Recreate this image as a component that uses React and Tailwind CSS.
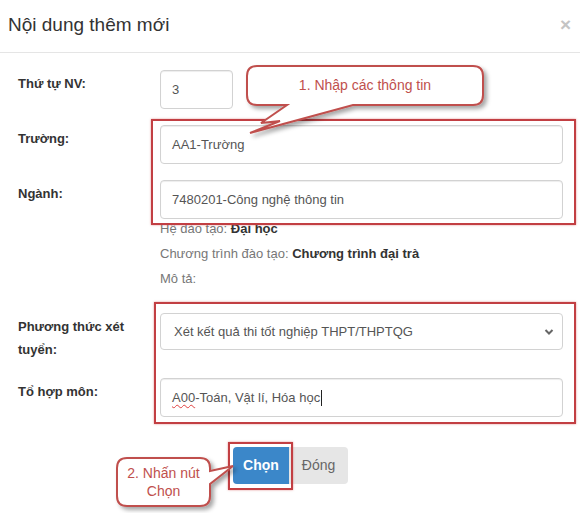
function Row({ label, children, className = "" }) {
  return (
    <div className={"flex " + className}>
      <label className="w-[142px] shrink-0 pr-[15px] pt-[2px] text-[13px] font-bold leading-[23px] text-[#333]">
        {label}
      </label>
      <div className="min-w-0 flex-1">{children}</div>
    </div>
  );
}

function Field({ children, className = "" }) {
  return (
    <div
      className={
        "flex h-[39px] items-center rounded-[4px] border border-[#d2d2d2] bg-white pl-[11px] text-[13px] text-[#555] shadow-[inset_0_1px_1px_rgba(0,0,0,0.075)] " +
        className
      }
    >
      {children}
    </div>
  );
}

export default function App() {
  return (
    <div className="relative h-[513px] w-[580px] overflow-hidden bg-white font-['Liberation_Sans',Arial,sans-serif] text-[#333]">
      {/* Header */}
      <div className="flex h-[53px] items-center justify-between border-b border-[#e5e5e5] pb-[3px] pl-2 pr-[9px]">
        <h4 className="text-[19px] leading-none text-[#333]">Nội dung thêm mới</h4>
        <span className="text-[19px] font-bold leading-none text-[#c4c4c4]">×</span>
      </div>

      {/* Body */}
      <div className="flex flex-col pl-[18px] pr-[17px] pt-[17px]">
        <Row label="Thứ tự NV:" className="mb-4">
          <Field className="w-[73px]">3</Field>
        </Row>
        <Row label="Trường:" className="mb-4">
          <Field>AA1-Trường</Field>
        </Row>
        <Row label="Ngành:" className="mb-[19px]">
          <Field>7480201-Công nghệ thông tin</Field>
          <div className="-mt-[3px] mb-[3px] text-[13px] leading-[25px] text-[#777]">
            <div>
              Hệ đào tạo: <b className="text-[#333]">Đại học</b>
            </div>
            <div>
              Chương trình đào tạo: <b className="text-[#333]">Chương trình đại trà</b>
            </div>
            <div>Mô tả:</div>
          </div>
        </Row>
        <Row label="Phương thức xét tuyển:" className="mb-[17px]">
          <div className="flex h-[37px] items-center justify-between rounded-[4px] border border-[#d2d2d2] bg-white pl-[13px] pr-[8px] text-[13px] text-[#555]">
            <span>Xét kết quả thi tốt nghiệp THPT/THPTQG</span>
            <svg width="10" height="8" viewBox="0 0 10 8">
              <path d="M1.5 2 L5 5.5 L8.5 2" fill="none" stroke="#666" strokeWidth="2" />
            </svg>
          </div>
        </Row>
        <Row label="Tổ hợp môn:" className="mb-[30px]">
          <Field>
            <span className="underline decoration-[#e04040] decoration-wavy decoration-1 underline-offset-2">A00</span>
            <span>-Toán, Vật lí, Hóa học</span>
            <span className="ml-[1px] inline-block h-[16px] w-px bg-[#222]" />
          </Field>
        </Row>
        <div className="flex justify-center">
          <button className="h-[37px] w-[56px] rounded-l-[4px] bg-[#3b87c9] text-[14px] font-bold text-white">
            Chọn
          </button>
          <button className="h-[37px] w-[59px] rounded-r-[4px] bg-[#e6e6e6] text-[14px] text-[#666]">
            Đóng
          </button>
        </div>
      </div>

      {/* Annotation rectangles */}
      <div className="pointer-events-none absolute left-[151px] top-[119px] h-[106px] w-[425px] border-2 border-[#c23f43] shadow-[0_0_2px_rgba(210,80,80,0.6)]" />
      <div className="pointer-events-none absolute left-[154px] top-[302px] h-[122px] w-[422px] border-2 border-[#c23f43] shadow-[0_0_2px_rgba(210,80,80,0.6)]" />
      <div className="pointer-events-none absolute left-[228px] top-[442px] h-[48px] w-[65px] border-2 border-[#c23f43] shadow-[0_0_2px_rgba(210,80,80,0.6)]" />

      {/* Callout 1 */}
      <svg
        className="pointer-events-none absolute left-[238px] top-[58px]"
        width="262"
        height="84"
        viewBox="238 58 262 84"
      >
        <defs>
          <filter id="sh1" x="-10%" y="-20%" width="130%" height="160%">
            <feDropShadow dx="3" dy="3" stdDeviation="2" floodColor="#000" floodOpacity="0.35" />
          </filter>
        </defs>
        <path
          d="M257 66 H473 Q483 66 483 76 V95 Q483 105 473 105 H353 L250 133 L280 121 L261 123 L287 105 H257 Q247 105 247 95 V76 Q247 66 257 66 Z"
          fill="#fff"
          stroke="#c0504d"
          strokeWidth="2"
          filter="url(#sh1)"
        />
      </svg>
      <div className="pointer-events-none absolute left-[247px] top-[66px] flex h-[39px] w-[236px] items-center justify-center text-[14px] text-[#c0504d]">
        1. Nhập các thông tin
      </div>

      {/* Callout 2 */}
      <svg
        className="pointer-events-none absolute left-[110px] top-[450px]"
        width="130"
        height="63"
        viewBox="110 450 130 63"
      >
        <defs>
          <filter id="sh2" x="-10%" y="-20%" width="130%" height="160%">
            <feDropShadow dx="3" dy="3" stdDeviation="2" floodColor="#000" floodOpacity="0.35" />
          </filter>
        </defs>
        <path
          d="M127 458 H200 Q210 458 210 468 V471 L233 466 L210 484 V496 Q210 506 200 506 H127 Q117 506 117 496 V468 Q117 458 127 458 Z"
          fill="#fff"
          stroke="#c0504d"
          strokeWidth="2"
          filter="url(#sh2)"
        />
      </svg>
      <div className="pointer-events-none absolute left-[117px] top-[458px] flex h-[48px] w-[93px] flex-col items-center justify-center text-[14px] leading-[18px] text-[#c0504d]">
        <span>2. Nhấn nút</span>
        <span>Chọn</span>
      </div>
    </div>
  );
}
